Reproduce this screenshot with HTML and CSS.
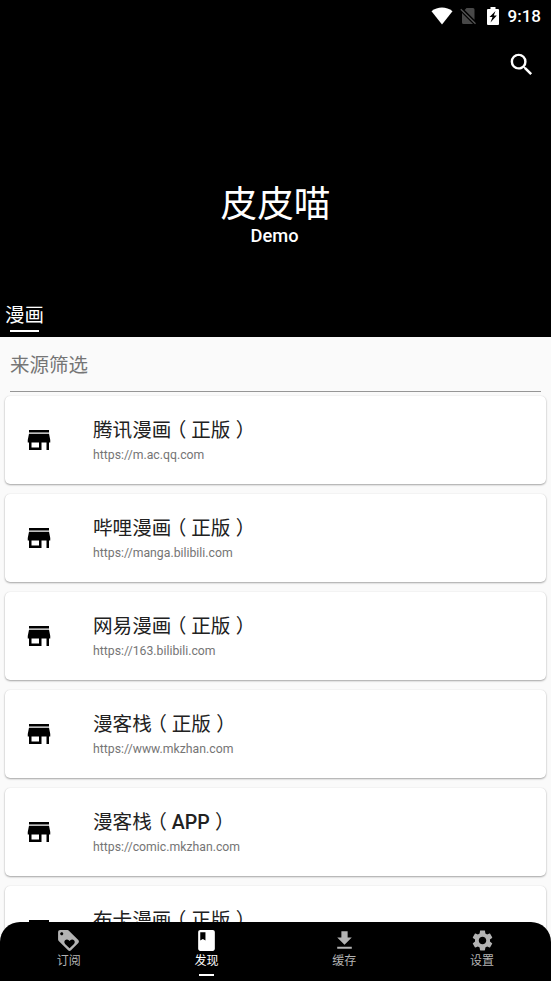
FILE: index.html
```html
<!DOCTYPE html>
<html lang="zh-CN">
<head>
<meta charset="utf-8">
<title>皮皮喵</title>
<link rel="stylesheet" href="styles.css">
</head>
<body>
<svg width="0" height="0" class="defs">
  <symbol id="store" viewBox="0 0 24 24"><path d="M20 4H4v2h16V4zm1 10v-2l-1-5H4l-1 5v2h1v6h10v-6h4v6h2v-6h1zm-9 4H6v-4h6v4z"/></symbol>
</svg>
<div class="app">
  <header class="hero">
    <div class="status">
      <svg class="wifi" viewBox="0 0 22 18"><path d="M.5 4.2C6.500-.8 15.500-.8 21.500 4.200L11 17.500z"/></svg>
      <svg class="sim" viewBox="0 0 17 18"><path d="M6.500 1H13q1.500 0 1.500 1.500V12.800L4.700 3zM2 6l11 11H3.500Q2 17 2 15.500z"/><path d="M.8 2.200L15.500 16.700" fill="none" stroke="#555" stroke-width="1.300"/></svg>
      <svg class="battery" viewBox="0 0 12 18"><path fill-rule="evenodd" d="M3.500 0h5v2H11q1 0 1 1v14q0 1-1 1H1q-1 0-1-1V3q0-1 1-1h2.500zM8.500 4L2.500 10H5.500L3.500 15.500L9.800 8.500H6.800z"/></svg>
      <span class="clock">9:18</span>
    </div>
    <svg class="search" viewBox="0 0 24 24"><path d="M15.500 14h-.79l-.28-.27A6.471 6.471 0 0 0 16 9.500 6.500 6.500 0 1 0 9.500 16c1.610 0 3.090-.59 4.230-1.570l.27.28v.79l5 4.990L20.490 19l-4.990-5zm-6 0C7.010 14 5 11.990 5 9.500S7.010 5 9.500 5 14 7.010 14 9.500 11.990 14 9.500 14z"/></svg>
    <h1>皮皮喵</h1>
    <p class="sub">Demo</p>
    <div class="tab">漫画</div>
  </header>
  <main>
    <div class="filter">来源筛选</div>
    <div class="list">
      <article class="card"><svg><use href="#store"/></svg><div><h2>腾讯漫画<i>（</i>正版<i>）</i></h2><p>https://m.ac.qq.com</p></div></article>
      <article class="card"><svg><use href="#store"/></svg><div><h2>哔哩漫画<i>（</i>正版<i>）</i></h2><p>https://manga.bilibili.com</p></div></article>
      <article class="card"><svg><use href="#store"/></svg><div><h2>网易漫画<i>（</i>正版<i>）</i></h2><p>https://163.bilibili.com</p></div></article>
      <article class="card"><svg><use href="#store"/></svg><div><h2>漫客栈<i>（</i>正版<i>）</i></h2><p>https://www.mkzhan.com</p></div></article>
      <article class="card"><svg><use href="#store"/></svg><div><h2>漫客栈<i>（</i><b>APP</b><i>）</i></h2><p>https://comic.mkzhan.com</p></div></article>
      <article class="card"><svg><use href="#store"/></svg><div><h2>布卡漫画<i>（</i>正版<i>）</i></h2></div></article>
    </div>
  </main>
  <nav>
    <a><svg viewBox="0 0 24 24"><path d="M21.410 11.580l-9-9C12.050 2.220 11.550 2 11 2H4c-1.100 0-2 .9-2 2v7c0 .55.22 1.050.59 1.420l9 9c.36.36.86.58 1.410.58s1.050-.22 1.410-.59l7-7c.37-.36.59-.86.59-1.410s-.23-1.060-.59-1.420zM5.500 7C4.670 7 4 6.330 4 5.500S4.670 4 5.500 4 7 4.670 7 5.500 6.330 7 5.500 7zm11.770 8.270L13 19.540l-4.270-4.270C8.280 14.810 8 14.190 8 13.500c0-1.380 1.120-2.500 2.500-2.500.69 0 1.320.28 1.770.74l.73.72.73-.73c.45-.45 1.080-.73 1.770-.73 1.380 0 2.500 1.120 2.500 2.500 0 .69-.28 1.320-.73 1.770z"/></svg><span>订阅</span></a>
    <a class="active"><svg viewBox="0 0 24 24"><path d="M18 2H6c-1.100 0-2 .9-2 2v16c0 1.100.9 2 2 2h12c1.100 0 2-.9 2-2V4c0-1.100-.9-2-2-2zM6 4h5v8l-2.500-1.500L6 12V4z"/></svg><span>发现</span></a>
    <a><svg viewBox="0 0 24 24"><path d="M19 9h-4V3H9v6H5l7 7 7-7zM5 18v2h14v-2H5z"/></svg><span>缓存</span></a>
    <a><svg viewBox="0 0 24 24"><path d="M19.140 12.940c.04-.3.06-.61.06-.94 0-.32-.02-.64-.07-.94l2.030-1.580c.18-.14.23-.41.12-.61l-1.920-3.320c-.12-.22-.37-.29-.59-.22l-2.390.96c-.5-.38-1.030-.7-1.620-.94l-.36-2.540c-.04-.24-.24-.41-.48-.41h-3.840c-.24 0-.43.17-.47.41l-.36 2.540c-.59.24-1.130.57-1.620.94l-2.390-.96c-.22-.08-.47 0-.59.22L2.740 8.870c-.12.21-.08.47.12.61l2.030 1.580c-.05.3-.09.63-.09.94s.02.64.07.94l-2.030 1.580c-.18.14-.23.41-.12.61l1.920 3.320c.12.22.37.29.59.22l2.390-.96c.5.38 1.030.7 1.620.94l.36 2.540c.05.24.24.41.48.41h3.840c.24 0 .44-.17.47-.41l.36-2.540c.59-.24 1.130-.56 1.620-.94l2.390.96c.22.08.47 0 .59-.22l1.920-3.320c.12-.22.07-.47-.12-.61l-2.010-1.580zM12 15.600c-1.980 0-3.600-1.620-3.600-3.600s1.620-3.600 3.600-3.600 3.600 1.620 3.600 3.600-1.620 3.600-3.600 3.600z"/></svg><span>设置</span></a>
  </nav>
</div>
</body>
</html>
```
FILE: styles.css
```css
* { box-sizing: border-box; margin: 0; padding: 0; }
body { font-family: Roboto, "Noto Sans CJK SC", sans-serif; overflow: hidden; }
.defs { position: absolute; }
.app { height: 981px; display: flex; flex-direction: column; background: #fafafa; overflow: hidden; position: relative; }
.hero { height: 337px; flex: none; background: #000; color: #fff; fill: #fff; display: flex; flex-direction: column; }
.status { height: 32px; padding: 0 10px 0 0; display: flex; justify-content: flex-end; align-items: center; }
.wifi { width: 22px; height: 18px; margin-right: 7px; }
.sim { width: 17px; height: 18px; fill: #484848; margin-right: 10px; }
.battery { width: 12px; height: 18px; margin-right: 9px; }
.clock { font-size: 17px; font-weight: 500; line-height: 32px; }
.search { width: 29.400px; height: 29.400px; margin: 18px 15px 0 auto; }
h1 { font-size: 36.700px; font-weight: 400; line-height: 44px; text-align: center; margin-top: 104px; }
.sub { font-size: 18.300px; font-weight: 500; line-height: 21px; margin-top: -2px; padding-right: 2px; text-align: center; }
.tab { font-size: 19.500px; line-height: 26px; width: 39px; margin: 57px 0 0 5px; display: flex; flex-direction: column; align-items: center; }
.tab::after { content: ""; width: 29px; height: 2px; background: #fff; margin-top: 1px; }
main { flex: 1; min-height: 0; }
.filter { height: 55px; margin: 0 10px; border-bottom: 1.500px solid #969696; font-size: 19.500px; line-height: 57px; color: #757575; }
.list { padding: 4px 5px 0; display: flex; flex-direction: column; gap: 10px; }
.card { height: 88.100px; flex: none; border-radius: 5px; background: #fff; box-shadow: 0 1px 2px rgba(0,0,0,.34), 0 0 1px rgba(0,0,0,.12); display: flex; padding-left: 19px; }
.card svg { width: 30px; height: 30px; margin: 29px 39px 0 0; flex: none; }
.card h2 { font-size: 19.600px; font-weight: 400; line-height: 26px; margin-top: 22px; color: #212121; white-space: nowrap; }
.card h2 b { font-weight: 500; }
/* Half-width brackets, centred in a full-width cell */
.card i { font-style: normal; font-feature-settings: "halt"; margin: 0 4.800px 0 5.300px; }
.card p { font-size: 12.250px; line-height: 15px; margin-top: 4px; color: #757575; }
nav { position: absolute; left: 0; right: 0; bottom: 0; height: 59px; background: #000; border-radius: 20px 20px 0 0; display: flex; }
nav a { flex: 1; display: flex; flex-direction: column; align-items: center; color: #b3b3b3; fill: #b3b3b3; padding-top: 6px; font-size: 12px; }
nav svg { width: 25px; height: 25px; }
nav span { line-height: 16px; }
nav .active { color: #fff; fill: #fff; }
nav .active::after { content: ""; width: 15px; height: 2px; background: #fff; margin-top: 5px; }
```
